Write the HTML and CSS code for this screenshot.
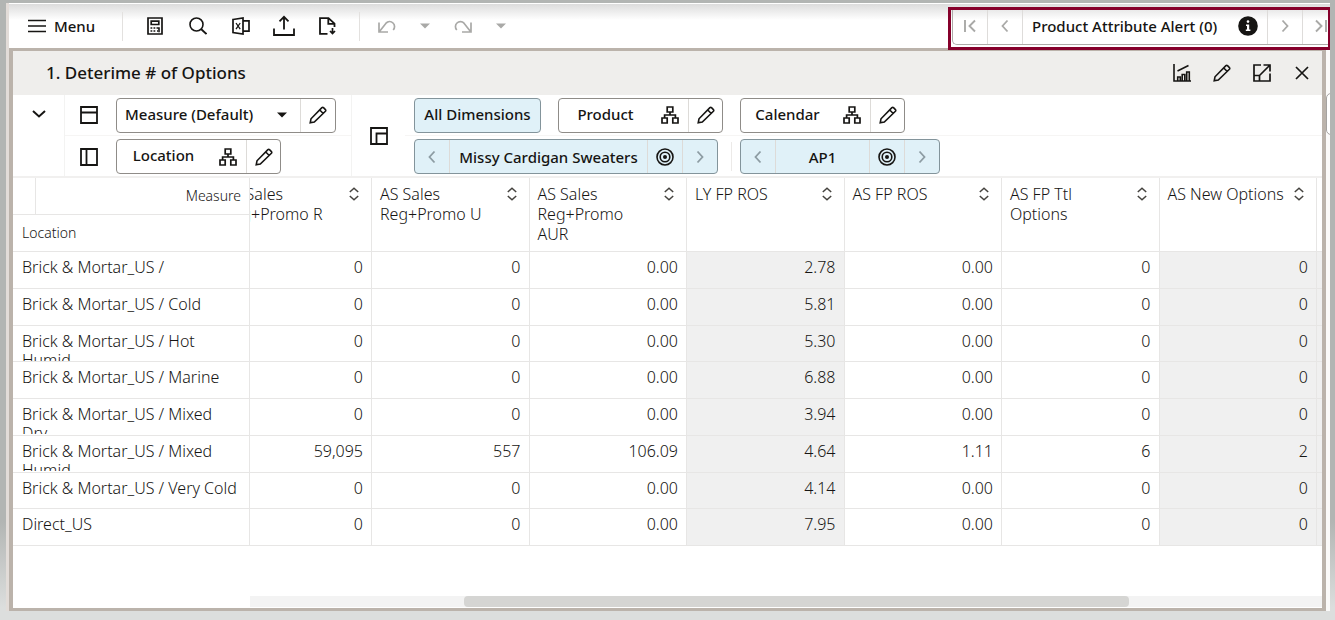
FILE: index.html
```html
<!DOCTYPE html>
<html lang="en">
<head>
<meta charset="utf-8">
<title>Determine # of Options</title>
<link rel="stylesheet" href="styles.css">
</head>
<body>
<svg class="sprite" aria-hidden="true">
  <defs>
    <symbol id="i-menu" viewBox="0 0 18 18"><path d="M0 3.500h18M0 9h18M0 14.500h18" stroke-width="1.5"/></symbol>
    <symbol id="i-calc" viewBox="0 0 18 18"><path d="M2 1h14v16H2zM5.200 4.200h7.600v3.300H5.200z" stroke-width="1.7"/><path d="M4.500 11h1.800M7.500 11h1.800M4.500 14h1.800M7.500 14h1.800M10.500 11h3M11 14h1M13 10.300v5" stroke-width="1.6"/></symbol>
    <symbol id="i-search" viewBox="0 0 18 18"><circle cx="7.500" cy="7.500" r="6.500" stroke-width="1.6"/><path d="M12 12l5.500 5" stroke-width="1.9"/></symbol>
    <symbol id="i-excel" viewBox="0 0 18 18"><path d="M1 2.500L11 1v16L1 15.500zM11 3.800h6v10.400h-6" stroke-width="1.7"/><path d="M4 6l4.200 6.200M8.200 6L4 12.200" stroke-width="1.300"/></symbol>
    <symbol id="i-up" viewBox="0 0 22 22"><path d="M1 13.500V20h20v-6.500M11 14.500V2M6.500 6.300L11 1.800l4.500 4.500" stroke-width="1.8"/></symbol>
    <symbol id="i-doc" viewBox="0 0 18 18"><path d="M9.500 16.800H2V1.200h8.500L16.500 6.700v3.300M10.300 1.500v5.300h5.700" stroke-width="1.8"/><path d="M14.500 11v5M12 14l2.500 2.500 2.500-2.500" stroke-width="1.7"/></symbol>
    <symbol id="i-undo" viewBox="0 0 20 16"><path d="M2 4.500v9.500h9M2.300 13.700L9 5.200A4.700 4.700 0 1 1 16.200 12" stroke-width="1.7"/></symbol>
    <symbol id="i-redo" viewBox="0 0 20 16"><path d="M18 4.500v9.500H9M17.700 13.700L11 5.200A4.700 4.700 0 1 0 3.800 12" stroke-width="1.7"/></symbol>
    <symbol id="i-caret" viewBox="0 0 10 6"><path class="solid" d="M0 .5h10L5 5.500z"/></symbol>
    <symbol id="i-first" viewBox="0 0 14 14"><path d="M2 1v12M12 1.500L6.500 7l5.500 5.500" stroke-width="1.9"/></symbol>
    <symbol id="i-last" viewBox="0 0 14 14"><path d="M12 1v12M2 1.500L7.500 7 2 12.500" stroke-width="1.9"/></symbol>
    <symbol id="i-prev" viewBox="0 0 14 14"><path d="M9.500 1.500L4.500 7l5 5.500" stroke-width="1.8"/></symbol>
    <symbol id="i-next" viewBox="0 0 14 14"><path d="M4.500 1.500L9.500 7l-5 5.500" stroke-width="1.8"/></symbol>
    <symbol id="i-info" viewBox="0 0 20 20"><circle class="solid" cx="10" cy="10" r="9.800"/><circle class="hole" cx="10" cy="5.600" r="1.300"/><path class="hole" d="M8 8.500h3.200v5h1.200v1.400H7.800v-1.400H9V9.900H8z"/></symbol>
    <symbol id="i-chart" viewBox="0 0 18 18"><path d="M1 0v17h17M4.700 17v-4h2.600v4M9.200 17V10.500h2.600V17M13.700 17V8h2.600v9M4.500 7L15.500 1.500" stroke-width="1.6"/></symbol>
    <symbol id="i-pen" viewBox="0 0 18 18"><path d="M1.200 16.800l.8-4L12.900 1.700q.800-.700 1.600 0l1.900 1.900q.700.800 0 1.600L5.300 16zM11 4.200l3 3" stroke-width="1.6"/></symbol>
    <symbol id="i-expand" viewBox="0 0 18 18"><path d="M8 1H1v16h16V9.500M1 11.500h5.500V17M6.500 11.500L16.500 1.500M10.500 1H17v6.500" stroke-width="1.7"/></symbol>
    <symbol id="i-close" viewBox="0 0 14 14"><path d="M1 1l12 12M13 1L1 13" stroke-width="1.7"/></symbol>
    <symbol id="i-down" viewBox="0 0 14 8"><path d="M1 1l6 5.500L13 1" stroke-width="2"/></symbol>
    <symbol id="i-rows" viewBox="0 0 18 18"><path d="M1 1h16v16H1zM1 6.500h16" stroke-width="1.8"/></symbol>
    <symbol id="i-cols" viewBox="0 0 18 18"><path d="M1 1h16v16H1zM6.500 1v16" stroke-width="1.8"/></symbol>
    <symbol id="i-page" viewBox="0 0 18 18"><path d="M1 1h16v16H1zM6.500 17V6.500H17" stroke-width="1.8"/></symbol>
    <symbol id="i-tree" viewBox="0 0 18 18"><path d="M6.200 1h5.600v5H6.200zM1 12h5.200v5H1zM11.800 12H17v5h-5.200zM9 6v3M3.600 12V9h10.800v3" stroke-width="1.7"/></symbol>
    <symbol id="i-target" viewBox="0 0 18 18"><circle cx="9" cy="9" r="8" stroke-width="1.6"/><circle cx="9" cy="9" r="4.800" stroke-width="1.6"/><circle class="solid" cx="9" cy="9" r="2"/></symbol>
    <symbol id="i-sort" viewBox="0 0 10 14"><path d="M.8 5L5 1.200 9.200 5M.8 9L5 12.800 9.200 9" stroke-width="1.500"/></symbol>
  </defs>
</svg>

<div class="app">
  <header class="toolbar">
    <button class="menu-btn"><svg class="icon"><use href="#i-menu"/></svg>Menu</button>
    <span class="rule"></span>
    <div class="tools">
      <button aria-label="Calculate"><svg class="icon"><use href="#i-calc"/></svg></button>
      <button aria-label="Search"><svg class="icon"><use href="#i-search"/></svg></button>
      <button aria-label="Export to Excel"><svg class="icon"><use href="#i-excel"/></svg></button>
      <button aria-label="Upload"><svg class="icon large"><use href="#i-up"/></svg></button>
      <button aria-label="Download"><svg class="icon"><use href="#i-doc"/></svg></button>
    </div>
    <span class="rule"></span>
    <div class="history">
      <button aria-label="Undo" disabled><svg class="icon wide"><use href="#i-undo"/></svg></button>
      <button aria-label="Undo list" disabled><svg class="icon caret"><use href="#i-caret"/></svg></button>
      <button aria-label="Redo" disabled><svg class="icon wide"><use href="#i-redo"/></svg></button>
      <button aria-label="Redo list" disabled><svg class="icon caret"><use href="#i-caret"/></svg></button>
    </div>
    <div class="alert-frame">
      <div class="alert-nav">
        <button class="cell" aria-label="First alert" disabled><svg class="icon small"><use href="#i-first"/></svg></button>
        <button class="cell" aria-label="Previous alert" disabled><svg class="icon small"><use href="#i-prev"/></svg></button>
        <button class="cell alert-name">Product Attribute Alert (0)<svg class="icon info"><use href="#i-info"/></svg></button>
        <button class="cell" aria-label="Next alert" disabled><svg class="icon small"><use href="#i-next"/></svg></button>
        <button class="cell last" aria-label="Last alert" disabled><svg class="icon small"><use href="#i-last"/></svg></button>
      </div>
    </div>
  </header>

  <div class="workspace">
    <main class="panel">
      <div class="titlebar">
        <h1>1. Deterime # of Options</h1>
        <div class="title-actions">
          <button aria-label="Chart"><svg class="icon"><use href="#i-chart"/></svg></button>
          <button aria-label="Edit"><svg class="icon"><use href="#i-pen"/></svg></button>
          <button aria-label="Maximize"><svg class="icon"><use href="#i-expand"/></svg></button>
          <button aria-label="Close"><svg class="icon small"><use href="#i-close"/></svg></button>
        </div>
      </div>

      <section class="dimensions">
        <button class="collapse" aria-label="Collapse"><svg class="icon chevron"><use href="#i-down"/></svg></button>
        <div class="axes">
          <div class="axis-row">
            <svg class="icon"><use href="#i-rows"/></svg>
            <div class="chip measure">
              <button class="name">Measure (Default)</button>
              <button class="act" aria-label="Choose measure"><svg class="icon caret"><use href="#i-caret"/></svg></button>
              <button class="act split" aria-label="Edit measure"><svg class="icon"><use href="#i-pen"/></svg></button>
            </div>
          </div>
          <div class="axis-row">
            <svg class="icon"><use href="#i-cols"/></svg>
            <div class="chip hier">
              <button class="name">Location</button>
              <button class="act tree" aria-label="Location hierarchy"><svg class="icon"><use href="#i-tree"/></svg></button>
              <button class="act split" aria-label="Edit location"><svg class="icon"><use href="#i-pen"/></svg></button>
            </div>
          </div>
        </div>
        <div class="page-axis"><svg class="icon"><use href="#i-page"/></svg></div>
        <div class="slices">
          <div class="slice-row">
            <div class="slot wide">
              <button class="chip tint all">All Dimensions</button>
              <div class="chip hier">
                <button class="name">Product</button>
                <button class="act tree" aria-label="Product hierarchy"><svg class="icon"><use href="#i-tree"/></svg></button>
                <button class="act split" aria-label="Edit product"><svg class="icon"><use href="#i-pen"/></svg></button>
              </div>
            </div>
            <div class="chip hier">
              <button class="name">Calendar</button>
              <button class="act tree" aria-label="Calendar hierarchy"><svg class="icon"><use href="#i-tree"/></svg></button>
              <button class="act split" aria-label="Edit calendar"><svg class="icon"><use href="#i-pen"/></svg></button>
            </div>
          </div>
          <div class="slice-row">
            <div class="slot wide">
              <div class="chip tint">
                <button class="act" aria-label="Previous product" disabled><svg class="icon small"><use href="#i-prev"/></svg></button>
                <button class="name value product">Missy Cardigan Sweaters</button>
                <button class="act split" aria-label="Select product"><svg class="icon"><use href="#i-target"/></svg></button>
                <button class="act split" aria-label="Next product" disabled><svg class="icon small"><use href="#i-next"/></svg></button>
              </div>
              <span class="rule short"></span>
            </div>
            <div class="chip tint">
              <button class="act" aria-label="Previous period" disabled><svg class="icon small"><use href="#i-prev"/></svg></button>
              <button class="name value period">AP1</button>
              <button class="act split" aria-label="Select period"><svg class="icon"><use href="#i-target"/></svg></button>
              <button class="act split" aria-label="Next period" disabled><svg class="icon small"><use href="#i-next"/></svg></button>
            </div>
          </div>
        </div>
      </section>

      <div class="grid-wrap">
        <table class="grid">
          <colgroup><col class="c-loc"><col class="c-first"><col><col><col><col><col><col><col class="c-rest"></colgroup>
          <thead>
            <tr>
              <th class="corner" scope="col"><div class="corner-top"><span>Measure</span></div><div class="corner-bottom">Location</div></th>
              <th class="cut" scope="col"><div class="head"><span>AS Sales<br>Reg+Promo R</span><svg class="icon sort"><use href="#i-sort"/></svg></div></th>
              <th scope="col"><div class="head"><span>AS Sales<br>Reg+Promo U</span><svg class="icon sort"><use href="#i-sort"/></svg></div></th>
              <th scope="col"><div class="head"><span>AS Sales<br>Reg+Promo<br>AUR</span><svg class="icon sort"><use href="#i-sort"/></svg></div></th>
              <th scope="col"><div class="head"><span>LY FP ROS</span><svg class="icon sort"><use href="#i-sort"/></svg></div></th>
              <th scope="col"><div class="head"><span>AS FP ROS</span><svg class="icon sort"><use href="#i-sort"/></svg></div></th>
              <th scope="col"><div class="head"><span>AS FP Ttl<br>Options</span><svg class="icon sort"><use href="#i-sort"/></svg></div></th>
              <th scope="col"><div class="head"><span>AS New Options</span><svg class="icon sort"><use href="#i-sort"/></svg></div></th>
              <td></td>
            </tr>
          </thead>
          <tbody>
            <tr><th scope="row"><div>Brick &amp; Mortar_US /</div></th><td>0</td><td>0</td><td>0.00</td><td class="ro">2.78</td><td>0.00</td><td>0</td><td class="ro">0</td><td class="ro"></td></tr>
            <tr><th scope="row"><div>Brick &amp; Mortar_US / Cold</div></th><td>0</td><td>0</td><td>0.00</td><td class="ro">5.81</td><td>0.00</td><td>0</td><td class="ro">0</td><td class="ro"></td></tr>
            <tr><th scope="row"><div>Brick &amp; Mortar_US / Hot<br>Humid</div></th><td>0</td><td>0</td><td>0.00</td><td class="ro">5.30</td><td>0.00</td><td>0</td><td class="ro">0</td><td class="ro"></td></tr>
            <tr><th scope="row"><div>Brick &amp; Mortar_US / Marine</div></th><td>0</td><td>0</td><td>0.00</td><td class="ro">6.88</td><td>0.00</td><td>0</td><td class="ro">0</td><td class="ro"></td></tr>
            <tr><th scope="row"><div>Brick &amp; Mortar_US / Mixed<br>Dry</div></th><td>0</td><td>0</td><td>0.00</td><td class="ro">3.94</td><td>0.00</td><td>0</td><td class="ro">0</td><td class="ro"></td></tr>
            <tr><th scope="row"><div>Brick &amp; Mortar_US / Mixed<br>Humid</div></th><td>59,095</td><td>557</td><td>106.09</td><td class="ro">4.64</td><td>1.11</td><td>6</td><td class="ro">2</td><td class="ro"></td></tr>
            <tr><th scope="row"><div>Brick &amp; Mortar_US / Very Cold</div></th><td>0</td><td>0</td><td>0.00</td><td class="ro">4.14</td><td>0.00</td><td>0</td><td class="ro">0</td><td class="ro"></td></tr>
            <tr><th scope="row"><div>Direct_US</div></th><td>0</td><td>0</td><td>0.00</td><td class="ro">7.95</td><td>0.00</td><td>0</td><td class="ro">0</td><td class="ro"></td></tr>
          </tbody>
        </table>
        <div class="scroll-track"><div class="scroll-thumb"></div></div>
      </div>
    </main>
    <div class="page-scroll"><div class="page-thumb"></div></div>
  </div>
</div>
</body>
</html>
```

FILE: styles.css
```css
* { box-sizing: border-box; }

body {
  margin: 0;
  min-height: 100vh;
  display: flex;
  padding: 3px 5px 9px 6px;
  background: linear-gradient(#b2b5b3 0, #b2b5b3 84%, #dcdedd 98%, #dcdedd 100%);
  font: 15px/20px "Noto Sans", "Open Sans", sans-serif;
  color: #161513;
  overflow: hidden;
}

button {
  display: inline-flex;
  align-items: center;
  justify-content: center;
  margin: 0;
  padding: 0;
  border: 0;
  background: none;
  color: inherit;
  font: inherit;
  font-weight: 500;
  white-space: nowrap;
}
button:disabled { color: #a9a9a7; }

.sprite { position: absolute; width: 0; height: 0; }
.icon {
  width: 18px;
  height: 18px;
  flex: none;
  fill: none;
  stroke: currentColor;
}
.solid { fill: currentColor; stroke: none; }
.hole { fill: #fff; stroke: none; }
.icon.small { width: 14px; height: 14px; }
.icon.large { width: 22px; height: 22px; }
.icon.wide { width: 20px; height: 16px; }
.icon.caret { width: 10px; height: 6px; }
.icon.chevron { width: 14px; height: 8px; }
.icon.info { width: 20px; height: 20px; }
.icon.sort { width: 10px; height: 14px; color: #45433f; }

.app {
  flex: 1;
  min-width: 0;
  display: flex;
  flex-direction: column;
  border-left: 3px solid #e2dcd8;
  background: #fff;
}

.toolbar {
  display: flex;
  align-items: center;
  height: 45px;
  padding-left: 18px;
  border-top: 1px solid #fff;
  background: linear-gradient(#dcdcdc, #fff 16px);
}
.menu-btn { gap: 8px; width: 69px; }
.rule { width: 1px; height: 29px; background: #e3e1df; }
.menu-btn + .rule { margin-left: 26px; }
.tools { display: flex; padding: 0 11px 0 10px; }
.tools button { width: 43px; height: 36px; }
.history { display: flex; padding-left: 8px; }
.history button { width: 38px; height: 36px; }
.alert-frame {
  margin: 0 0 -2px auto;
  align-self: flex-end;
  border: 3px solid #86002b;
  border-right-width: 2px;
  height: 43px;
  padding-left: 1px;
  z-index: 1;
}
.alert-nav {
  display: flex;
  height: 35px;
  border: solid #aeaba8;
  border-width: 0 0 1px 1px;
  border-radius: 0 0 0 5px;
}
.alert-nav .cell { width: 35px; padding-bottom: 3px; border-right: 1px solid #dedcda; }
.alert-nav .last { width: 25px; border: 0; justify-content: flex-end; }
.alert-nav .alert-name { width: 245px; justify-content: space-between; padding: 0 9px 3px 9px; }

.workspace { flex: 1; display: flex; min-height: 0; }
.panel {
  flex: 1;
  min-width: 0;
  display: flex;
  flex-direction: column;
  border: 4px solid #bbb3ab;
  border-width: 3px 4px;
}
.page-scroll {
  width: 4px;
  padding-top: 45px;
  background: #fbfaf9;
  overflow: hidden;
}
.page-thumb {
  width: 12px;
  height: 42px;
  border: 1px solid #a5a3a1;
  border-radius: 5px;
  background: #fff;
}

.titlebar {
  display: flex;
  align-items: center;
  justify-content: space-between;
  height: 44px;
  padding-left: 33px;
  background: #efeeec;
}
h1 { margin: 0; font-size: 17px; line-height: 22px; font-weight: 500; }
.title-actions { display: flex; }
.title-actions button { width: 40px; height: 36px; }

.dimensions { display: flex; height: 83px; border-bottom: 2px solid #f1f0ef; }
.collapse {
  width: 52px;
  height: 81px;
  padding-top: 15px;
  align-items: flex-start;
  border-right: 1px solid #f3f3f2;
}
.axes { width: 287px; border-right: 1px solid #f3f3f2; }
.axis-row { display: flex; align-items: center; gap: 18px; height: 41px; padding-left: 15px; }
.axis-row:first-child, .slice-row:first-child { border-bottom: 1px solid #f6f5f4; }
.page-axis { width: 53px; display: flex; align-items: center; justify-content: center; }
.slices { flex: 1; }
.slice-row { display: flex; align-items: center; height: 41px; padding-left: 9px; }
.slot.wide { width: 326px; display: flex; align-items: center; justify-content: space-between; padding-right: 17px; }
.slice-row:last-child .slot { justify-content: flex-start; gap: 13px; padding-right: 0; }
.rule.short { height: 29px; background: #eceae8; }

.chip {
  display: flex;
  align-items: stretch;
  height: 35px;
  border: 1px solid #8f8c88;
  border-radius: 4px;
  background: #fff;
}
.chip .name { padding-bottom: 3px; }
.chip .act { width: 36px; }
.chip .split { width: 35px; border-left: 1px solid #dddbd8; }
.measure { width: 220px; }
.measure .name { flex: 1; justify-content: flex-start; padding-left: 8px; }
.hier { width: 165px; }
.hier .name { flex: 1; }
.hier .split { width: 34px; }
.tint { background: #e0f1f8; border-color: #83949b; }
.tint.all { width: 127px; align-items: center; padding-bottom: 3px; }
.tint .act:first-child { width: 34px; }
.tint button:disabled { color: #8d9ca3; }
.chip .value { border-left: 1px solid #dddbd8; padding: 0; }
.product { width: 198px; }
.period { width: 94px; }

.grid-wrap { flex: 1; display: flex; flex-direction: column; }
.grid {
  width: 100%;
  height: 368px;
  table-layout: fixed;
  border-collapse: separate;
  border-spacing: 0;
  font-size: 16px;
}
.c-loc { width: 237px; }
.c-first { width: 122px; }
.c-rest { width: 5px; }
.grid th, .grid td {
  padding: 0 8px;
  border: solid #e7e6e5;
  border-width: 0 1px 1px 0;
  font-weight: 300;
  text-align: right;
  overflow: hidden;
  color: #161513;
}
.grid td:last-child { padding: 0; border-right: 0; }
.grid thead tr { height: 74px; }
.grid thead th { vertical-align: top; text-align: left; }
.head { display: flex; align-items: flex-start; justify-content: space-between; padding-top: 6px; white-space: nowrap; }
.head .sort { margin: 3px 4px 0 0; }
.cut .head { margin-left: -35px; }
.grid .corner { padding: 0; font-size: 14px; }
.corner-top {
  display: flex;
  height: 37px;
  border-bottom: 1px solid #e7e6e5;
  justify-content: flex-end;
}
.corner-top span {
  flex: 1;
  margin-left: 22px;
  padding: 8px 8px 0 0;
  border-left: 1px solid #e7e6e5;
  text-align: right;
}
.corner-bottom { display: flex; align-items: center; height: 36px; padding-left: 9px; }
.grid tbody th { text-align: left; padding-left: 9px; padding-right: 0; vertical-align: top; }
.grid tbody th div { height: 35px; padding-top: 6px; overflow: hidden; line-height: 19px; }
.grid tbody td { vertical-align: top; padding-top: 6px; line-height: 19px; }
.grid td.ro { background: #f0f0f0; }

.scroll-track { margin: auto 0 1px 237px; height: 11px; background: #f3f3f3; }
.scroll-thumb { width: 62%; height: 11px; margin-left: 20%; border-radius: 4px; background: #d5d5d3; }
```
